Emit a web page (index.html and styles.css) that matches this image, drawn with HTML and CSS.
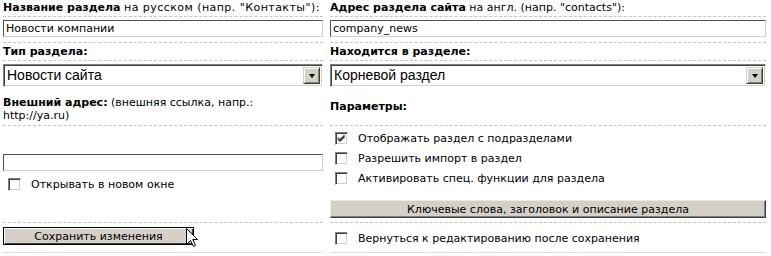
FILE: index.html
```html
<!DOCTYPE html>
<html lang="ru">
<head>
    <meta charset="UTF-8">
    <title>Редактирование раздела</title>
    <link rel="stylesheet" href="styles.css">
</head>
<body>
    <div class="form">
        <div class="cell lbl"><b>Название раздела</b> <span class="ru">на русском (напр. "Контакты"):</span></div>
        <div class="cell lbl"><b>Адрес раздела сайта</b> на англ. (напр. "contacts"):</div>

        <div class="cell fld"><input class="text" type="text" value="Новости компании"></div>
        <div class="cell fld"><input class="text" type="text" value="company_news"></div>

        <div class="cell lbl mid"><b>Тип раздела:</b></div>
        <div class="cell lbl mid"><b>Находится в разделе:</b></div>

        <div class="cell sel">
            <div class="select"><span class="val">Новости сайта</span><span class="arrow"></span></div>
        </div>
        <div class="cell sel">
            <div class="select"><span class="val">Корневой раздел</span><span class="arrow"></span></div>
        </div>

        <div class="cell ext-lbl"><b>Внешний адрес:</b> (внешняя ссылка, напр.:<br>http://ya.ru)</div>
        <div class="cell params"><b>Параметры:</b></div>

        <div class="cell ext">
            <input class="text" type="text" value="">
            <label class="chk"><span class="box"></span>Открывать в новом окне</label>
        </div>
        <div class="cell opts">
            <label class="chk"><span class="box"><svg width="11" height="11" viewBox="0 0 11 11"><path d="M2 4.5 L4 6.5 L8.5 2 M2 5.5 L4 7.5 L8.5 3 M2 6.5 L4 8.5 L8.5 4" stroke="#000" stroke-width="1" fill="none"/></svg></span>Отображать раздел с подразделами</label>
            <label class="chk"><span class="box"></span>Разрешить импорт в раздел</label>
            <label class="chk"><span class="box"></span>Активировать спец. функции для раздела</label>
            <button class="btn wide">Ключевые слова, заголовок и описание раздела</button>
        </div>

        <div class="cell last save">
            <button class="btn def">Сохранить изменения</button>
            <svg class="cursor" width="13" height="20" viewBox="0 0 13 20"><path d="M0.5 0.5 L0.5 16.5 L4.5 12.5 L7.5 18.5 L9.5 17.5 L6.8 11.5 L11.5 11.5 Z" fill="#fff" stroke="#000" stroke-width="1"/></svg>
        </div>
        <div class="cell last back">
            <label class="chk"><span class="box"></span>Вернуться к редактированию после сохранения</label>
        </div>
    </div>
</body>
</html>
```

FILE: styles.css
```css
body {
    margin: 0;
    font-family: "DejaVu Sans", Verdana, sans-serif;
    font-size: 11px;
    color: #000;
    background: #fff;
}
.form {
    display: grid;
    grid-template-columns: 320px 436px;
    column-gap: 7px;
    padding: 0 5px 0 3px;
}
.cell {
    border-bottom: 1px dashed #c4c4c4;
    line-height: 13px;
}
.lbl {
    padding: 1px 0 2px;
}
.ru {
    letter-spacing: 0.45px;
}
.mid {
    padding: 2px 0 2px;
}
.fld {
    padding: 3px 0 5px;
}
.text {
    display: block;
    width: 100%;
    height: 17px;
    box-sizing: border-box;
    margin: 0;
    padding: 0 2px;
    border: 1px solid;
    border-color: #505050 #d4d0c8 #d4d0c8 #505050;
    font-family: "DejaVu Sans", Verdana, sans-serif;
    font-size: 11px;
    color: #000;
    background: #fff;
}
.sel {
    border-bottom: none;
    padding: 3px 0 4px;
}
.select {
    display: flex;
    align-items: center;
    height: 23px;
    box-sizing: border-box;
    border: 1px solid;
    border-color: #808080 #fff #fff #808080;
    box-shadow: inset 1px 1px #404040, inset -1px -1px #d4d0c8;
    padding: 2px;
    background: #fff;
}
.select .val {
    flex: 1;
    padding-left: 1px;
    font-family: "Liberation Sans", Arial, sans-serif;
    font-size: 14px;
}
.select .arrow {
    width: 17px;
    height: 17px;
    box-sizing: border-box;
    background: #d4d0c8;
    border: 1px solid;
    border-color: #d4d0c8 #404040 #404040 #d4d0c8;
    box-shadow: inset 1px 1px #fff, inset -1px -1px #808080;
    display: flex;
    align-items: center;
    justify-content: center;
}
.select .arrow::after {
    content: "";
    border-left: 3.5px solid transparent;
    border-right: 3.5px solid transparent;
    border-top: 4px solid #000;
    margin-top: 1px;
}
.ext-lbl {
    padding: 5px 0 3px;
}
.params {
    display: flex;
    align-items: center;
    padding-bottom: 3px;
}
.ext {
    display: flex;
    flex-direction: column;
    justify-content: center;
}
.chk {
    display: flex;
    align-items: center;
    height: 20px;
    gap: 10px;
    padding-left: 5px;
}
.ext .chk {
    margin-top: 3px;
}
.box {
    width: 13px;
    height: 13px;
    box-sizing: border-box;
    border: 1px solid;
    border-color: #808080 #fff #fff #808080;
    box-shadow: inset 1px 1px #404040, inset -1px -1px #d4d0c8;
    background: #fff;
    flex: none;
}
.box svg {
    display: block;
}
.opts {
    padding: 2px 0 4px;
}
.btn {
    display: block;
    margin: 0;
    height: 18px;
    box-sizing: border-box;
    background: #d4d0c8;
    font-family: "DejaVu Sans", Verdana, sans-serif;
    font-size: 11px;
    color: #000;
    padding: 0;
    border: 1px solid;
    border-color: #e8e8e8 #404040 #404040 #e8e8e8;
    box-shadow: inset -1px -1px #808080;
}
.wide {
    width: 100%;
    margin-top: 12px;
}
.last {
    border-bottom: 1px solid #d6dde9;
}
.save {
    position: relative;
    padding: 4px 0 7px;
}
.def {
    width: 191px;
    border: 1px solid #000;
    box-shadow: inset 1px 1px #fff, inset -1px -1px #404040;
}
.cursor {
    position: absolute;
    left: 183px;
    top: 5px;
}
.back {
    display: flex;
    align-items: center;
    padding-top: 2px;
}
```
